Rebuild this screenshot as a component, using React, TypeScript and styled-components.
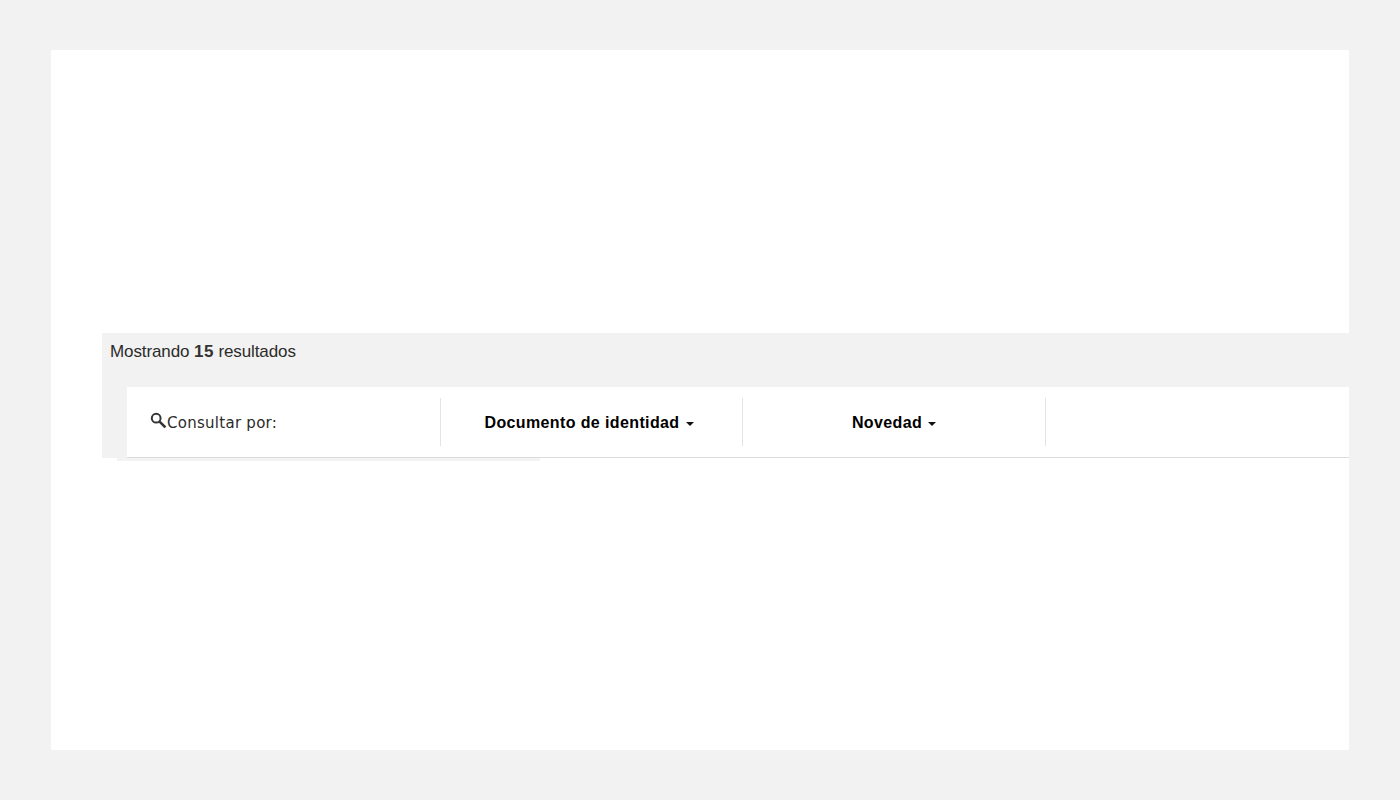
import React from "react";
import styled, { createGlobalStyle } from "styled-components";

const GlobalStyle = createGlobalStyle`
  html, body {
    margin: 0;
    background: #f2f2f2;
  }
  body {
    font-family: "Liberation Sans", Arial, sans-serif;
  }
`;

const Page = styled.div`
  box-sizing: border-box;
  width: 1400px;
  height: 800px;
  padding: 50px 51px;
  overflow: hidden;
`;

const Sheet = styled.main`
  box-sizing: border-box;
  height: 700px;
  background: #ffffff;
  padding: 283px 0 0 51px;
`;

const ResultsPanel = styled.section`
  background: #f2f2f2;
  height: 125px;
`;

const ResultCount = styled.p`
  margin: 0;
  padding: 9px 0 0 8px;
  height: 54px;
  box-sizing: border-box;
  font-size: 17px;
  line-height: 20px;
  letter-spacing: -0.1px;
  color: #2b2b2b;

  b {
    color: #333333;
    letter-spacing: 0.4px;
  }
`;

const FilterBar = styled.div`
  box-sizing: border-box;
  display: flex;
  align-items: center;
  height: 71px;
  margin-left: 25px;
  background: #ffffff;
  border-bottom: 1px solid #dcdcdc;
`;

const Cell = styled.div<{ $width: number; $insetRight?: number }>`
  box-sizing: border-box;
  display: flex;
  align-items: center;
  justify-content: center;
  width: ${(p) => p.$width}px;
  height: 48px;
  padding-top: 2px;
  padding-right: ${(p) => p.$insetRight ?? 0}px;
  border-right: 1px solid #e4e4e4;
`;

const SearchCell = styled(Cell)`
  justify-content: flex-start;
  padding-left: 23px;
`;

const SearchLabel = styled.span`
  font-family: "DejaVu Sans", Verdana, sans-serif;
  font-size: 15px;
  color: #2b2b2b;
  letter-spacing: 0.27px;
`;

const SearchIcon = styled.svg`
  width: 17px;
  height: 17px;
  margin-top: -6px;
  flex: none;
`;

const FilterButton = styled.button`
  display: flex;
  align-items: center;
  gap: 6px;
  padding: 0;
  border: 0;
  background: none;
  font-family: "Liberation Sans", Arial, sans-serif;
  font-size: 16px;
  font-weight: 700;
  letter-spacing: 0.38px;
  color: #000000;
`;

const Caret = styled.span`
  width: 0;
  height: 0;
  margin-top: 1px;
  border-left: 4.5px solid transparent;
  border-right: 4.5px solid transparent;
  border-top: 4px solid #111111;
`;

const PanelEdge = styled.div`
  width: 423px;
  height: 3px;
  margin-left: 15px;
  background: #f3f3f3;
`;

const App: React.FC = () => {
  return (
    <Page>
      <GlobalStyle />
      <Sheet>
        <ResultsPanel>
          <ResultCount>
            Mostrando <b>15</b> resultados
          </ResultCount>
          <FilterBar>
            <SearchCell $width={314}>
              <SearchIcon viewBox="0 0 17 17" fill="none" stroke="#333333">
                <circle cx="6.2" cy="6.2" r="4.4" strokeWidth="2" />
                <path d="M9.6 9.6l5.8 5.8" strokeWidth="2.6" />
              </SearchIcon>
              <SearchLabel>Consultar por:</SearchLabel>
            </SearchCell>
            <Cell $width={302} $insetRight={5}>
              <FilterButton>
                Documento de identidad
                <Caret />
              </FilterButton>
            </Cell>
            <Cell $width={303}>
              <FilterButton>
                Novedad
                <Caret />
              </FilterButton>
            </Cell>
          </FilterBar>
        </ResultsPanel>
        <PanelEdge />
      </Sheet>
    </Page>
  );
};

export default App;
